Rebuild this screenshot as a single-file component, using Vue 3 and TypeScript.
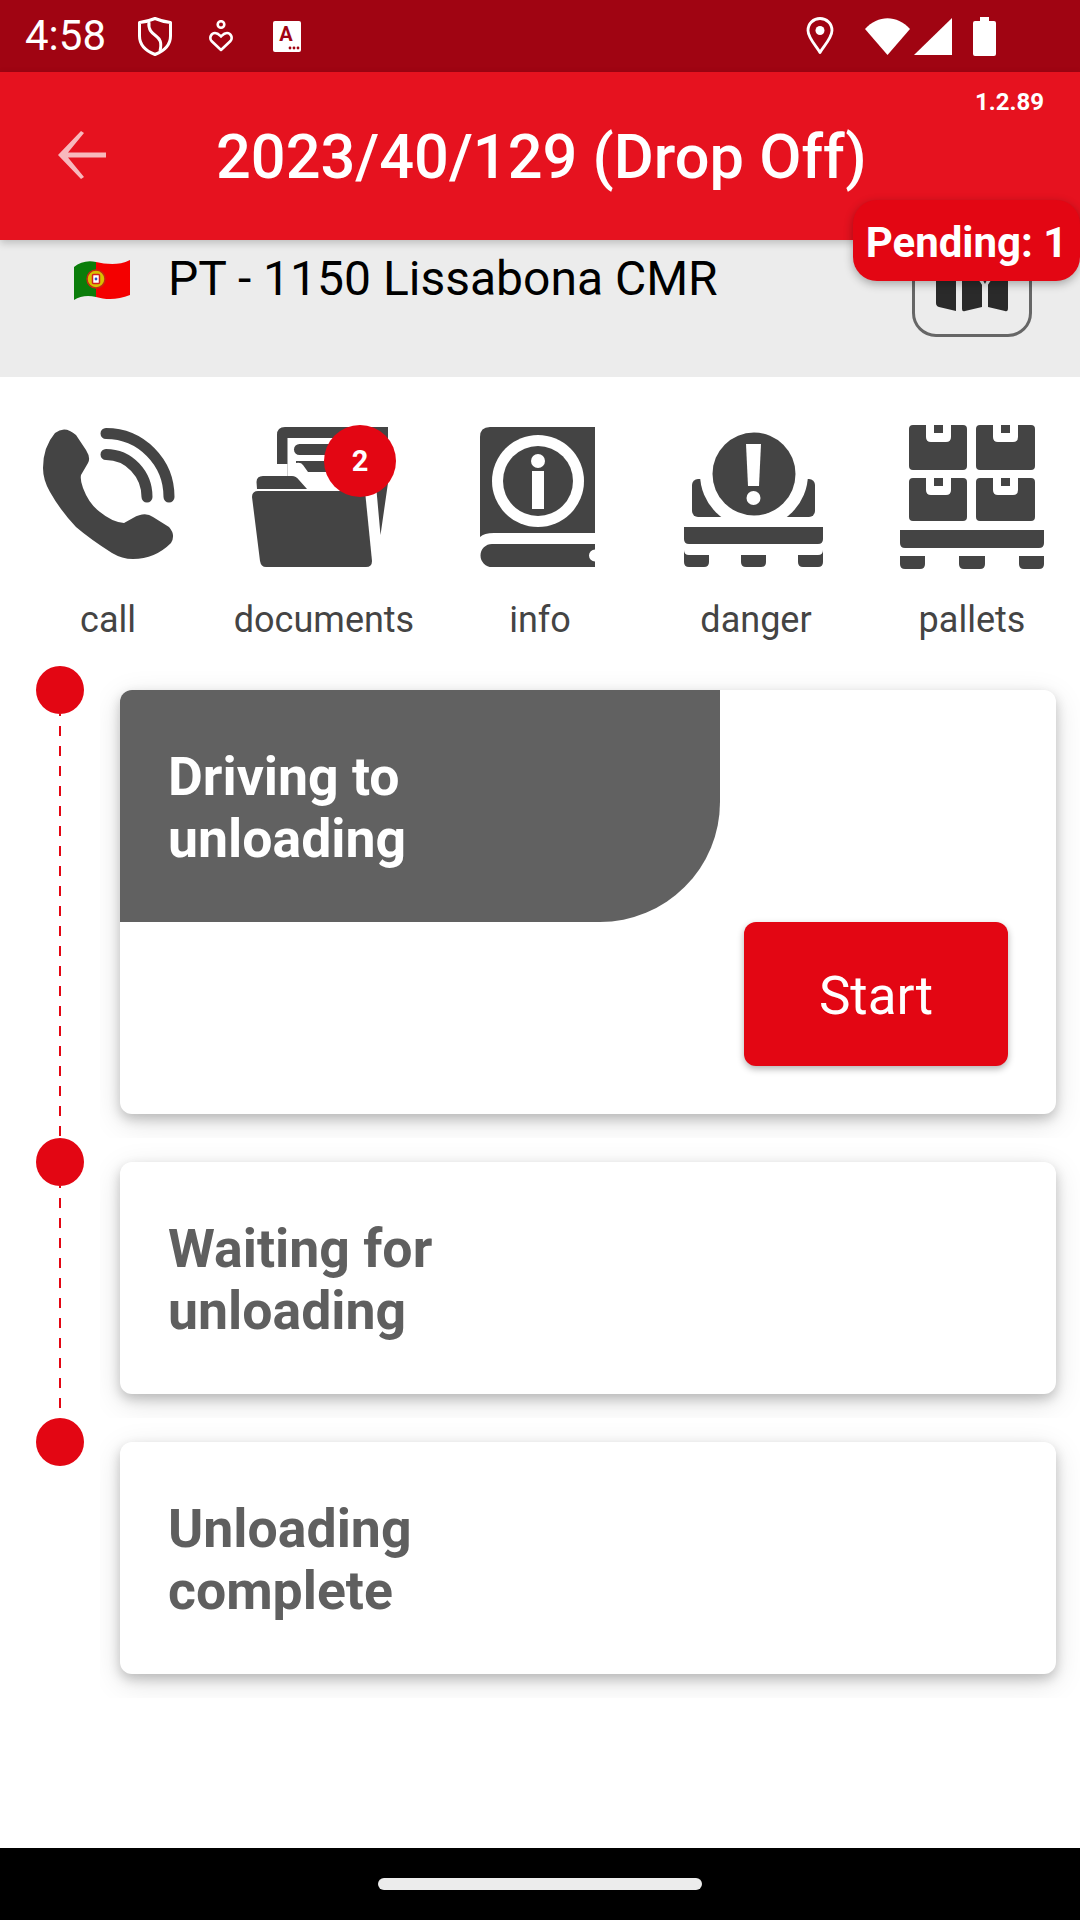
<template>
  <div class="screen">
    <div class="status-bar">
      <span class="time">4:58</span>
      <svg class="st-shield" width="34" height="39" viewBox="0 0 34 39">
        <path d="M17 1.500 C23 4 28 5 32.500 5.500 V19 C32.500 28 26 34 17 37.500 C8 34 1.500 28 1.500 19 V5.500 C6 5 11 4 17 1.500 Z" fill="none" stroke="#fff" stroke-width="3" stroke-linejoin="round" />
        <path d="M11 5 C10 13 14 16 18 19 C22 22 24 25 22 34" fill="none" stroke="#fff" stroke-width="3" />
      </svg>
      <svg class="st-heart" width="24" height="32" viewBox="0 0 24 32">
        <circle cx="12" cy="4.500" r="3.300" fill="none" stroke="#fff" stroke-width="2.600" />
        <path d="M12 30 L2.500 21 C0 18 2 13 6 13 C9 13 10.500 15 12 16.500 C13.500 15 15 13 18 13 C22 13 24 18 21.500 21 Z" fill="none" stroke="#fff" stroke-width="2.600" stroke-linejoin="round" />
      </svg>
      <svg class="st-a" width="28" height="31" viewBox="0 0 28 31">
        <rect width="28" height="31" rx="2" fill="#fff" />
        <text x="13" y="20" class="st-a-letter">A</text>
        <circle cx="17" cy="27" r="1.400" fill="#a00412" />
        <circle cx="21" cy="27" r="1.400" fill="#a00412" />
        <circle cx="25" cy="27" r="1.400" fill="#a00412" />
      </svg>
      <div class="status-right">
        <svg width="28" height="38" viewBox="0 0 28 38">
          <path d="M14 35.500 C11 30 2 21 2 13.500 C2 6.500 7.500 1.500 14 1.500 C20.500 1.500 26 6.500 26 13.500 C26 21 17 30 14 35.500 Z" fill="none" stroke="#fff" stroke-width="2.800" stroke-linejoin="round" />
          <circle cx="14" cy="13.500" r="4.500" fill="#fff" />
        </svg>
        <svg class="st-wifi" width="45" height="37" viewBox="0 0 45 37">
          <path d="M0 11 C13 -3.500 32 -3.500 45 11 L22.500 37 Z" fill="#fff" />
        </svg>
        <svg class="st-signal" width="38" height="37" viewBox="0 0 38 37">
          <path d="M38 0 V37 H0 Z" fill="#fff" />
        </svg>
        <svg class="st-battery" width="23" height="39" viewBox="0 0 23 39">
          <path d="M7 0 H16 V4 H21 Q23 4 23 6 V37 Q23 39 21 39 H2 Q0 39 0 37 V6 Q0 4 2 4 H7 Z" fill="#fff" />
        </svg>
      </div>
    </div>

    <header class="app-header">
      <svg class="back" width="48" height="48" viewBox="0 0 48 48">
        <path d="M48 21.500 H10 L26 2 L23 0 L0 24 L23 48 L26 46 L10 26.500 H48 Z" fill="#fff" fill-opacity="0.7" />
      </svg>
      <h1 class="title">2023/40/129 (Drop Off)</h1>
      <span class="version">1.2.89</span>
      <div class="pending">Pending: 1</div>
    </header>

    <section class="destination">
      <svg class="flag" width="56" height="42" viewBox="0 0 56 42">
        <path d="M0 8 C6 3 14 1 22 3 V38 C14 36 6 37 0 41 Z" fill="#0a7d0a" />
        <path d="M22 3 C32 5 44 7 56 1 V36 C44 41 32 41 22 38 Z" fill="#f40000" />
        <circle cx="22" cy="20" r="9" fill="#d8c000" stroke="#c42a12" stroke-width="1.500" />
        <rect x="18.500" y="15.500" width="7" height="9" rx="1" fill="#fff" stroke="#d32020" stroke-width="1.500" />
        <circle cx="22" cy="20" r="1.400" fill="#2a55c0" />
      </svg>
      <span class="place">PT - 1150 Lissabona CMR</span>
      <button class="map-btn">
        <svg width="72" height="60" viewBox="0 0 72 60">
          <path d="M0 2 L20 6 V58 L3 54 Q0 53 0 50 Z" fill="#2a2a2a" />
          <path d="M26 6 L46 2 V54 L29 58 Q26 59 26 56 Z" fill="#2a2a2a" />
          <path d="M52 2 L72 6 V55 Q72 59 69 58 L52 54 Z" fill="#2a2a2a" />
          <path d="M49 -2 C40 -2 35 5 35 11 C35 19 44 27 49 37 C54 27 63 19 63 11 C63 5 58 -2 49 -2 Z" fill="#ececec" />
          <path d="M49 3 C43 3 39 7 39 12 C39 18 46 24 49 31 C52 24 59 18 59 12 C59 7 55 3 49 3 Z" fill="#2a2a2a" />
        </svg>
      </button>
    </section>

    <nav class="tools">
      <div class="tool">
        <svg class="tool-icon" viewBox="0 0 216 144">
          <path d="M55 8 Q65 0 76 10 L86 25 Q91 33 88 38 L81 50 Q80 55 83 63 Q89 79 100 87 Q112 97 124 98 L133 93 Q145 86 153 92 L169 102 Q176 110 171 118 Q155 134 133 134 Q122 134 112 128 Q90 114 76 102 Q60 85 50 67 Q43 55 43 43 Q43 22 55 8 Z" fill="#444" />
          <path d="M106 8.500 C141 8.500 169 37 169 72" fill="none" stroke="#444" stroke-width="11" stroke-linecap="round" />
          <path d="M106 29.500 C129 29.500 147 49 147 72" fill="none" stroke="#444" stroke-width="11" stroke-linecap="round" />
        </svg>
        <span class="tool-label">call</span>
      </div>
      <div class="tool">
        <svg class="tool-icon" viewBox="0 0 216 144">
          <path d="M61 39 V10 Q61 2 69 2 H172 V58 L164.500 110 L160 60 H71.500 V39 Z" fill="#444" />
          <path d="M71.500 13 H160 V66 H71.500 Z" fill="#fff" />
          <rect x="78" y="19" width="82" height="11" rx="5.500" fill="#444" />
          <path d="M80 36 H160 V47 H92 L87 40 Q85 37 80 38 Z" fill="#444" />
          <path d="M40.500 57 Q40.500 51 47 51 H76 Q80 51 83 55 L91 64 H41 Z" fill="#444" />
          <path d="M36 72 Q36 66 42 66 H149 L156 136 Q156 142 150 142 H50 Q45 142 44 136 Z" fill="#444" />
          <circle cx="144" cy="36" r="36" fill="#e30613" />
          <text x="144" y="46" class="badge-num">2</text>
        </svg>
        <span class="tool-label">documents</span>
      </div>
      <div class="tool">
        <svg class="tool-icon" viewBox="0 0 216 144">
          <path d="M48 112 V12 Q48 2 58 2 H163 V108 H62 Q52 108 48 112 Z" fill="#444" />
          <circle cx="106" cy="56" r="46" fill="#fff" />
          <circle cx="106" cy="56" r="35" fill="#444" />
          <circle cx="106" cy="36" r="7" fill="#fff" />
          <rect x="100" y="46" width="12" height="38" fill="#fff" />
          <path d="M60 119 H163 V124.500 A6 6 0 0 0 163 136.500 V142 H60 A11.500 11.500 0 0 1 60 119 Z" fill="#444" />
        </svg>
        <span class="tool-label">info</span>
      </div>
      <div class="tool">
        <svg class="tool-icon" viewBox="0 0 216 144">
          <rect x="44" y="54" width="123" height="38" rx="6" fill="#444" />
          <circle cx="106" cy="49" r="54" fill="#fff" />
          <circle cx="106" cy="49" r="41.500" fill="#444" />
          <path d="M98 19 H113 L111 61 H100 Z" fill="#fff" />
          <circle cx="105.500" cy="73" r="7" fill="#fff" />
          <path d="M36 102 H175 V114 Q175 119 170 119 H41 Q36 119 36 114 Z" fill="#444" />
          <path d="M36 125 Q36 130 41 130 H61 V137 Q61 142 56 142 H41 Q36 142 36 137 Z" fill="#444" />
          <path d="M93 130 H118 V137 Q118 142 113 142 H98 Q93 142 93 137 Z" fill="#444" />
          <path d="M175 125 Q175 130 170 130 H150 V137 Q150 142 155 142 H170 Q175 142 175 137 Z" fill="#444" />
        </svg>
        <span class="tool-label">danger</span>
      </div>
      <div class="tool">
        <svg class="tool-icon" viewBox="0 0 216 144">
          <path d="M49 0 H62 V12 Q62 17 67 17 H82 Q87 17 87 12 V0 H99 Q103 0 103 4 V41 Q103 45 99 45 H49 Q45 45 45 41 V4 Q45 0 49 0 Z" fill="#444" />
          <rect x="70" y="0" width="9" height="8" fill="#444" />
          <path d="M116 0 H129 V12 Q129 17 134 17 H149 Q154 17 154 12 V0 H167 Q171 0 171 4 V41 Q171 45 167 45 H116 Q112 45 112 41 V4 Q112 0 116 0 Z" fill="#444" />
          <rect x="137" y="0" width="9" height="8" fill="#444" />
          <path d="M49 53 H62 V65 Q62 70 67 70 H82 Q87 70 87 65 V53 H99 Q103 53 103 57 V92 Q103 96 99 96 H49 Q45 96 45 92 V57 Q45 53 49 53 Z" fill="#444" />
          <rect x="70" y="53" width="9" height="8" fill="#444" />
          <path d="M116 53 H129 V65 Q129 70 134 70 H149 Q154 70 154 65 V53 H167 Q171 53 171 57 V92 Q171 96 167 96 H116 Q112 96 112 92 V57 Q112 53 116 53 Z" fill="#444" />
          <rect x="137" y="53" width="9" height="8" fill="#444" />
          <path d="M36 105 H180 V118 Q180 123 175 123 H41 Q36 123 36 118 Z" fill="#444" />
          <path d="M36 131 H61 V139 Q61 144 56 144 H41 Q36 144 36 139 Z" fill="#444" />
          <path d="M95 131 H121 V139 Q121 144 116 144 H100 Q95 144 95 139 Z" fill="#444" />
          <path d="M155 131 H180 V139 Q180 144 175 144 H160 Q155 144 155 139 Z" fill="#444" />
        </svg>
        <span class="tool-label">pallets</span>
      </div>
    </nav>

    <main class="timeline">
      <div class="step">
        <div class="rail">
          <span class="dot"></span>
          <span class="line"></span>
        </div>
        <div class="step-body">
          <div class="card">
            <div class="card-title active">Driving to<br />unloading</div>
            <div class="card-actions">
              <button class="start">Start</button>
            </div>
          </div>
        </div>
      </div>
      <div class="step">
        <div class="rail">
          <span class="dot"></span>
          <span class="line"></span>
        </div>
        <div class="step-body">
          <div class="card">
            <div class="card-title">Waiting for<br />unloading</div>
          </div>
        </div>
      </div>
      <div class="step">
        <div class="rail">
          <span class="dot"></span>
        </div>
        <div class="step-body">
          <div class="card">
            <div class="card-title">Unloading<br />complete</div>
          </div>
        </div>
      </div>
    </main>

    <div class="nav-bar">
      <span class="pill"></span>
    </div>
  </div>
</template>

<script setup lang="ts">
</script>

<style scoped>
.screen {
  width: 1080px;
  height: 1920px;
  display: flex;
  flex-direction: column;
  background: #fff;
  font-family: Roboto, "Liberation Sans", sans-serif;
  overflow: hidden;
}

.status-bar {
  height: 72px;
  flex-shrink: 0;
  display: flex;
  align-items: center;
  padding-left: 25px;
  background: #a00412;
  color: #fff;
}

.time {
  font-size: 42px;
  width: 113px;
  line-height: 72px;
}

.st-heart {
  margin-left: 37px;
}

.st-a {
  margin-left: 40px;
}

.st-a-letter {
  font-size: 20px;
  font-weight: 700;
  fill: #a00412;
  text-anchor: middle;
  font-family: Roboto, sans-serif;
}

.status-right {
  margin-left: auto;
  margin-right: 84px;
  display: flex;
  align-items: center;
}

.st-wifi {
  margin-left: 31px;
}

.st-signal {
  margin-left: 4px;
}

.st-battery {
  margin-left: 21px;
}

.app-header {
  position: relative;
  z-index: 3;
  height: 168px;
  flex-shrink: 0;
  display: flex;
  align-items: center;
  padding-left: 58px;
  padding-top: 2px;
  box-sizing: border-box;
  background: #e6121f;
  box-shadow: 0 3px 8px rgba(0, 0, 0, 0.2);
  color: #fff;
}

.back {
  flex-shrink: 0;
  margin-bottom: 4px;
}

.title {
  margin: 0 0 0 110px;
  font-size: 61.3px;
  font-weight: 500;
  white-space: nowrap;
}

.version {
  position: absolute;
  top: 16px;
  right: 36px;
  font-size: 24px;
  font-weight: 700;
}

.pending {
  position: absolute;
  right: 0;
  top: 128px;
  width: 227px;
  height: 81px;
  padding-top: 3px;
  display: flex;
  align-items: center;
  justify-content: center;
  box-sizing: border-box;
  border-radius: 24px;
  background: #e30613;
  box-shadow: 0 3px 10px rgba(0, 0, 0, 0.3);
  font-size: 42px;
  font-weight: 700;
  white-space: nowrap;
}

.destination {
  height: 137px;
  flex-shrink: 0;
  display: flex;
  align-items: flex-start;
  padding: 12px 48px 0 74px;
  box-sizing: border-box;
  background: #ececec;
}

.flag {
  margin-top: 7px;
}

.place {
  margin-left: 38px;
  font-size: 48px;
  line-height: 54px;
  color: #000;
  white-space: nowrap;
}

.map-btn {
  margin: -35px 0 0 auto;
  width: 120px;
  height: 120px;
  padding: 12px 0 0 0;
  display: flex;
  align-items: center;
  justify-content: center;
  box-sizing: border-box;
  border: 3px solid #666;
  border-radius: 24px;
  background: transparent;
}

.tools {
  height: 289px;
  flex-shrink: 0;
  display: grid;
  grid-template-columns: repeat(5, 216px);
  padding-top: 48px;
  box-sizing: border-box;
}

.tool {
  display: flex;
  flex-direction: column;
  align-items: center;
}

.tool-icon {
  width: 216px;
  height: 144px;
}

.badge-num {
  font-size: 29px;
  font-weight: 700;
  fill: #fff;
  text-anchor: middle;
  font-family: Roboto, sans-serif;
}

.tool-label {
  margin-top: 28px;
  font-size: 36px;
  line-height: 46px;
  color: #444;
}

.timeline {
  flex: 1;
  min-height: 0;
}

.step {
  display: flex;
}

.rail {
  width: 80px;
  padding-left: 20px;
  flex-shrink: 0;
  display: flex;
  flex-direction: column;
  align-items: center;
}

.dot {
  width: 48px;
  height: 48px;
  flex-shrink: 0;
  border-radius: 50%;
  background: #e30613;
}

.line {
  flex: 1;
  width: 2px;
  background: repeating-linear-gradient(to bottom, #e30613 0, #e30613 2px, transparent 2px, transparent 12px, #e30613 12px, #e30613 20px);
}

.step-body {
  flex: 1;
  min-width: 0;
  padding: 24px 24px 24px 20px;
  overflow: hidden;
}

.card {
  border-radius: 12px;
  background: #fff;
  box-shadow: 0 5px 12px rgba(0, 0, 0, 0.2), 0 8px 30px rgba(0, 0, 0, 0.13);
  overflow: hidden;
}

.card-title {
  width: 600px;
  height: 232px;
  display: flex;
  flex-direction: column;
  justify-content: center;
  padding-left: 48px;
  padding-top: 3px;
  box-sizing: border-box;
  font-size: 53.6px;
  font-weight: 700;
  line-height: 62px;
  color: #5f5f5f;
}

.card-title.active {
  border-bottom-right-radius: 120px;
  background: #616161;
  color: #fff;
}

.card-actions {
  display: flex;
  justify-content: flex-end;
  padding: 0 48px 48px 0;
}

.start {
  width: 264px;
  height: 144px;
  padding: 4px 0 0;
  border: 0;
  border-radius: 12px;
  background: #e30613;
  box-shadow: 0 3px 7px rgba(0, 0, 0, 0.3);
  color: #fff;
  font-family: Roboto, "Liberation Sans", sans-serif;
  font-size: 53px;
}

.nav-bar {
  height: 72px;
  flex-shrink: 0;
  display: flex;
  align-items: center;
  justify-content: center;
  background: #000;
}

.pill {
  width: 324px;
  height: 12px;
  border-radius: 6px;
  background: #ececec;
}
</style>
